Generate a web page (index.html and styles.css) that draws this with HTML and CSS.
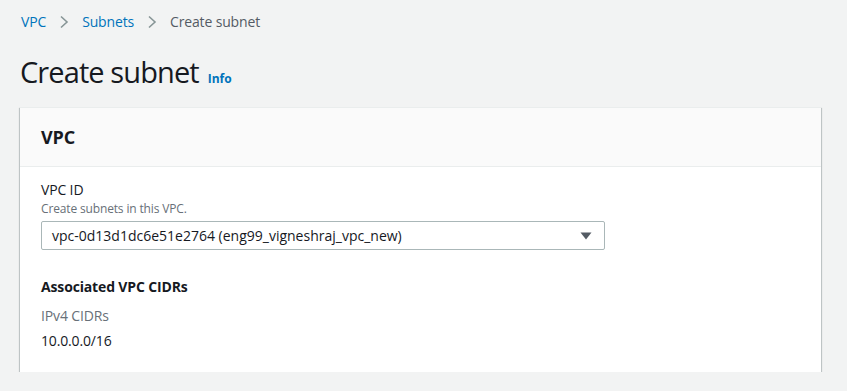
FILE: index.html
```html
<!DOCTYPE html>
<html lang="en">
<head>
    <meta charset="UTF-8">
    <meta name="viewport" content="width=device-width, initial-scale=1.0">
    <title>Create subnet | VPC</title>
    <link rel="stylesheet" href="styles.css">
</head>
<body>
    <nav class="breadcrumbs">
        <a href="#">VPC</a>
        <svg class="crumb-sep" width="10" height="14" viewBox="0 0 10 14"><path d="M2 1.5 L8 7 L2 12.5" fill="none" stroke="#879596" stroke-width="1.6"/></svg>
        <a href="#">Subnets</a>
        <svg class="crumb-sep" width="10" height="14" viewBox="0 0 10 14"><path d="M2 1.5 L8 7 L2 12.5" fill="none" stroke="#879596" stroke-width="1.6"/></svg>
        <span class="current">Create subnet</span>
    </nav>

    <div class="page-header">
        <h1>Create subnet</h1>
        <a href="#" class="info">Info</a>
    </div>

    <div class="container">
        <div class="container-header">
            <h2>VPC</h2>
        </div>
        <div class="container-body">
            <div class="form-group">
                <label for="vpcId">VPC ID</label>
                <div class="description">Create subnets in this VPC.</div>
                <div class="select" id="vpcId">
                    <span>vpc-0d13d1dc6e51e2764 (eng99_vigneshraj_vpc_new)</span>
                    <svg width="12" height="8" viewBox="0 0 12 8"><path d="M0.5 0.5 H11.5 L6 7.5 Z" fill="#545b64"/></svg>
                </div>
            </div>

            <h3>Associated VPC CIDRs</h3>
            <div class="key">IPv4 CIDRs</div>
            <div class="value">10.0.0.0/16</div>
        </div>
    </div>
</body>
</html>
```

FILE: styles.css
```css
body {
    font-family: "Open Sans", Arial, sans-serif;
    margin: 0;
    padding: 0 26px 0 20px;
    background-color: #f2f3f3;
    color: #16191f;
    font-size: 14px;
    letter-spacing: -0.15px;
}
a {
    color: #0073bb;
    text-decoration: none;
}
.breadcrumbs {
    display: flex;
    align-items: center;
    gap: 13px;
    height: 22px;
    padding-top: 11px;
    padding-left: 1px;
    font-size: 14px;
    line-height: 22px;
}
.breadcrumbs .current {
    color: #545b64;
}
.crumb-sep {
    display: block;
}
.page-header {
    display: flex;
    align-items: baseline;
    gap: 9px;
    margin-top: 21px;
    height: 40px;
}
h1 {
    margin: 0;
    font-size: 29px;
    font-weight: 400;
    line-height: 36px;
    letter-spacing: -0.9px;
}
.info {
    font-size: 12px;
    font-weight: 700;
    letter-spacing: 0;
}
.container {
    margin-top: 13px;
    background-color: #fff;
    box-shadow: 0 1px 1px 0 rgba(0,28,36,0.45), 1px 1px 1px 0 rgba(0,28,36,0.15), -1px 1px 1px 0 rgba(0,28,36,0.15);
    border-top: 1px solid #eaeded;
}
.container-header {
    background-color: #fafafa;
    border-bottom: 1px solid #eaeded;
    padding: 0 21px;
    height: 58px;
    display: flex;
    align-items: center;
}
h2 {
    margin: 0;
    font-size: 18px;
    font-weight: 700;
    line-height: 22px;
}
.container-body {
    padding: 12px 21px 20px;
}
.form-group label {
    display: block;
    font-size: 14px;
    line-height: 22px;
}
.description {
    font-size: 12px;
    line-height: 16px;
    color: #687078;
}
.select {
    box-sizing: border-box;
    width: 564px;
    height: 29px;
    margin-top: 4px;
    border: 1px solid #aab7b8;
    border-radius: 2px;
    padding: 0 12px 0 10px;
    display: flex;
    align-items: center;
    justify-content: space-between;
    font-size: 14px;
    letter-spacing: 0;
}
h3 {
    margin: 26px 0 0;
    font-size: 14px;
    font-weight: 700;
    line-height: 22px;
}
.key {
    margin-top: 7px;
    color: #687078;
    line-height: 22px;
}
.value {
    margin-top: 3px;
    line-height: 22px;
}
```
